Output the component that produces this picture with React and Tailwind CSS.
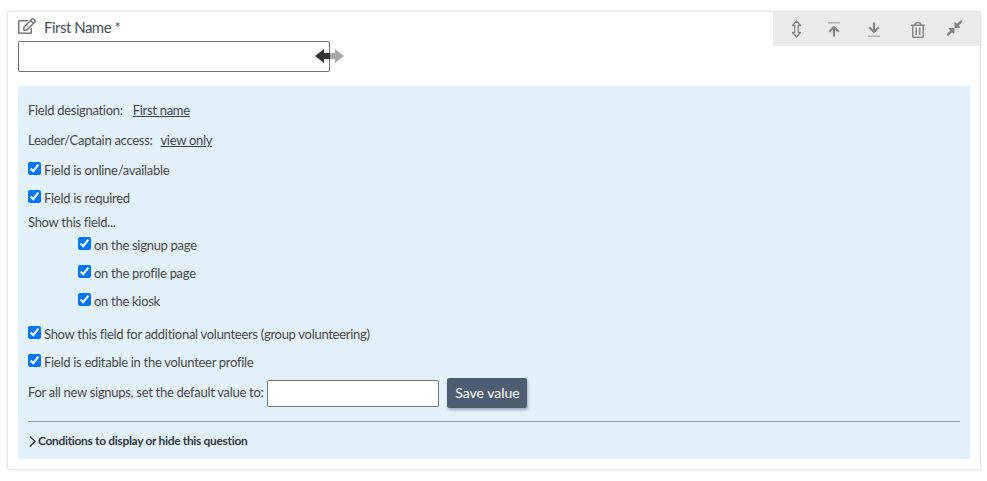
import { FaRegEdit, FaRegTrashAlt, FaCompressAlt } from 'react-icons/fa';

const CheckRow = ({ label, className = '' }) => (
  <label className={`flex items-start ${className}`}>
    <input type="checkbox" defaultChecked className="w-[13px] h-[13px] mt-[1px] mr-[3px] accent-[#0075ff]" />
    <span className="leading-[18px] mb-[1px]">{label}</span>
  </label>
);

const App = () => {
  return (
    <div className="w-[987px] h-[481px] bg-white pt-[11px] pl-[7px] font-['Lato','Liberation_Sans',sans-serif] text-[13px] tracking-[-0.29px] text-[#4a4a4a]">
      <div className="relative w-[974px] h-[459px] bg-white border border-[#e8e8e8] rounded-[2px] shadow-[0_0_3px_rgba(0,0,0,0.1)] px-[10px] pt-[4px]">
        <div className="absolute top-0 right-0 w-[207px] h-[34px] bg-[#ebebeb] rounded-tr-[2px] flex items-center text-[#858585]">
          <svg viewBox="0 0 11 18" className="w-[11px] h-[18px] ml-[18px]">
            <path d="M5.5 1 L9.5 5.5 L7.3 5.5 L7.3 12.5 L9.5 12.5 L5.5 17 L1.5 12.5 L3.7 12.5 L3.7 5.5 L1.5 5.5 Z" fill="none" stroke="#858585" strokeWidth="1.3" strokeLinejoin="round" />
          </svg>
          <svg viewBox="0 0 12 15" className="w-[12px] h-[15px] ml-[26px]">
            <path d="M0 0h12v1.6H0z" fill="#b5b5b5" />
            <path d="M6 3.5 L11.5 9 L10 10.4 L7.1 7.6 L7.1 14.5 L4.9 14.5 L4.9 7.6 L2 10.4 L0.5 9 Z" fill="#858585" />
          </svg>
          <svg viewBox="0 0 12 15" className="w-[12px] h-[15px] ml-[28px]">
            <path d="M0 13.4h12V15H0z" fill="#b5b5b5" />
            <path d="M6 11.5 L11.5 6 L10 4.6 L7.1 7.4 L7.1 0.5 L4.9 0.5 L4.9 7.4 L2 4.6 L0.5 6 Z" fill="#858585" />
          </svg>
          <FaRegTrashAlt className="w-[14px] h-[16px] ml-[31px] mt-[1px]" />
          <FaCompressAlt className="w-[17px] h-[18px] ml-[21px] -mt-[3px]" />
        </div>

        <div className="flex items-center h-[20px]">
          <FaRegEdit className="w-[18px] h-[16px] text-[#777777]" />
          <span className="ml-[8px] mt-[2px] text-[15px] tracking-[-0.5px] text-[#44505c]">First Name *</span>
        </div>

        <div className="flex items-center mt-[5px]">
          <input type="text" className="w-[312px] h-[31px] border border-[#6e6e6e] rounded-[2px] bg-white" />
          <svg viewBox="0 0 29 16" className="w-[29px] h-[16px] -ml-[15px] -mt-[1px]">
            <path d="M15 5 H20 V1 L29 8 L20 15 V11 H15 Z" fill="#a8a8a8" />
            <path d="M0 8 L9 1 V5 H15 V11 H9 V15 Z" fill="#333333" />
          </svg>
        </div>

        <div className="mt-[14px] w-[952px] h-[373px] bg-[#e3f1fb] px-[10px] pt-[15px]">
          <div className="leading-[18px]">
            Field designation:
            <a className="ml-[10px] underline text-[#3d4652]">First name</a>
          </div>
          <div className="leading-[18px] mt-[12px]">
            Leader/Captain access:
            <a className="ml-[8px] underline text-[#3d4652]">view only</a>
          </div>
          <CheckRow label="Field is online/available" className="mt-[12px]" />
          <CheckRow label="Field is required" className="mt-[9px]" />
          <div className="leading-[18px] mt-[5px]">Show this field...</div>
          <div className="pl-[50px]">
            <CheckRow label="on the signup page" className="mt-[5px]" />
            <CheckRow label="on the profile page" className="mt-[9px]" />
            <CheckRow label="on the kiosk" className="mt-[9px]" />
          </div>
          <CheckRow label="Show this field for additional volunteers (group volunteering)" className="mt-[14px]" />
          <CheckRow label="Field is editable in the volunteer profile" className="mt-[9px]" />
          <div className="flex items-center mt-[6px]">
            <span>For all new signups, set the default value to:</span>
            <input type="text" className="ml-[4px] w-[172px] h-[27px] bg-white border border-[#767676] rounded-[2px]" />
            <button className="ml-[8px] w-[80px] h-[30px] bg-[#4d5e73] text-white text-[14px] tracking-normal leading-[28px] rounded-[2px] shadow-[1px_2px_3px_rgba(0,0,0,0.3)]">
              Save value
            </button>
          </div>
          <hr className="mt-[13px] border-t border-[#9a9a9a]" />
          <div className="flex items-center mt-[10px] text-[12px] tracking-[-0.33px] font-bold text-[#333a42]">
            <svg viewBox="0 0 10 14" className="w-[9px] h-[13px] mr-[1px]" fill="none" stroke="#222222" strokeWidth="1.3">
              <path d="M2 1.5 L8 7 L2 12.5" />
            </svg>
            Conditions to display or hide this question
          </div>
        </div>
      </div>
    </div>
  );
};

export default App;
